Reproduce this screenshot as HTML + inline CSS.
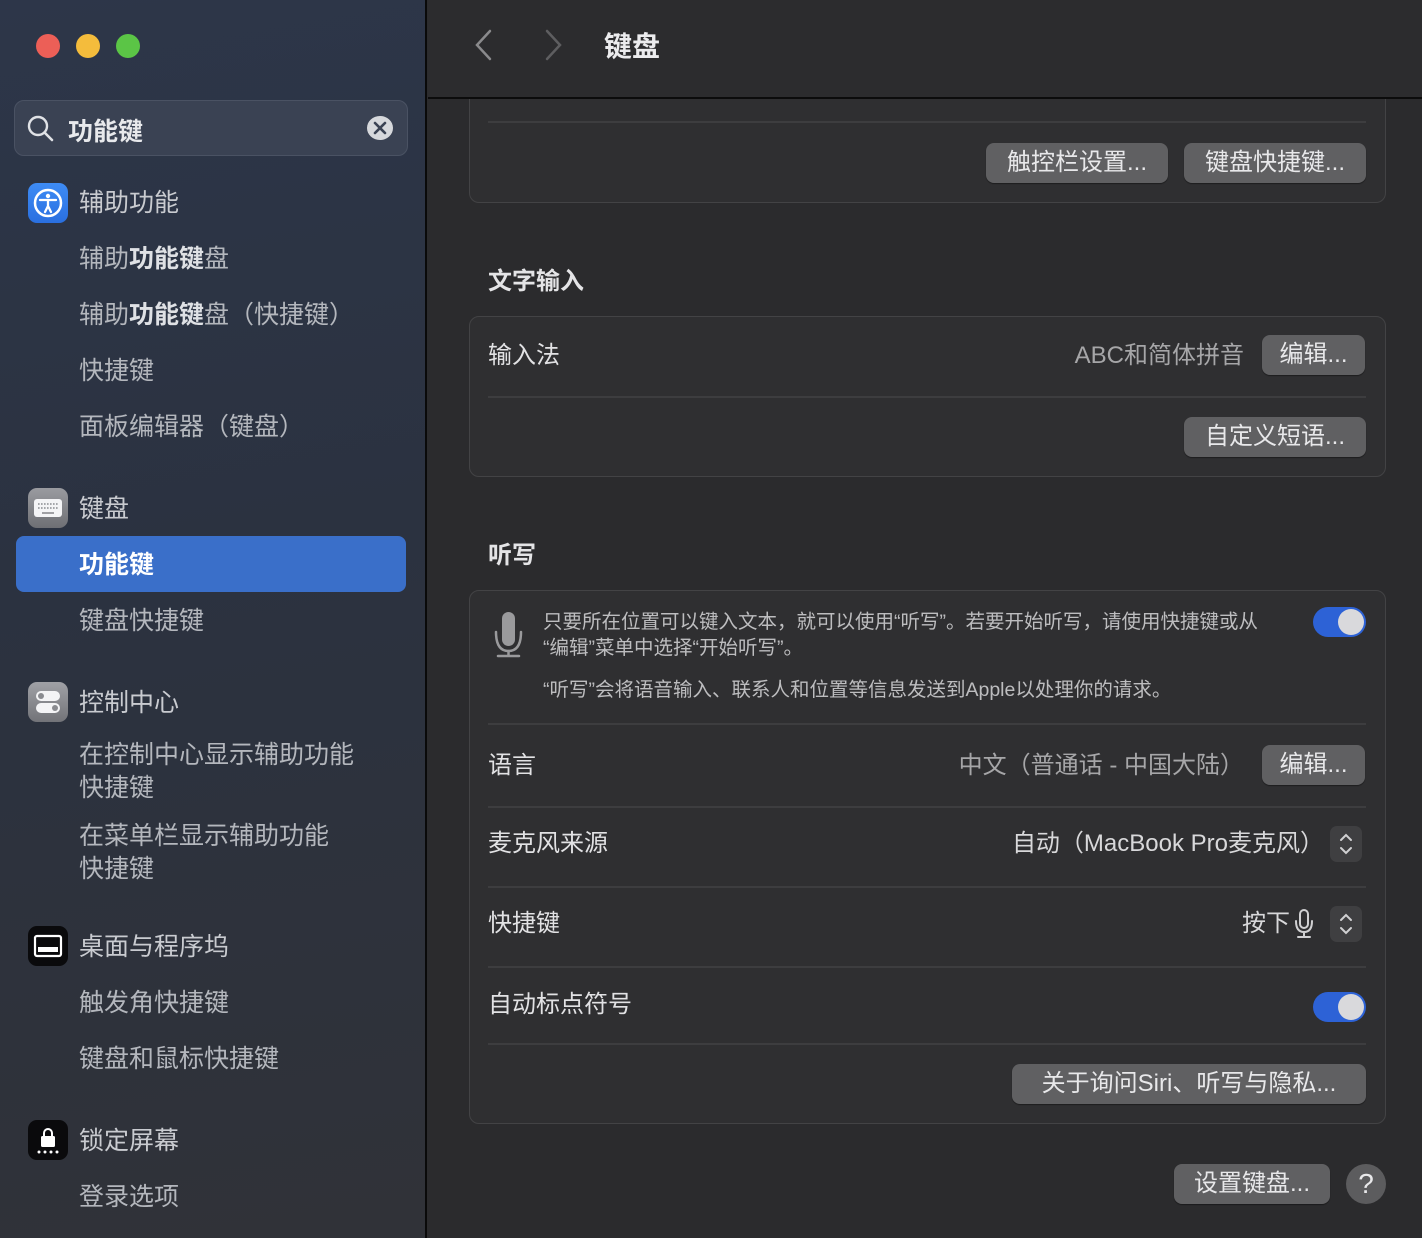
<!DOCTYPE html>
<html><head><meta charset="utf-8">
<style>
*{margin:0;padding:0;box-sizing:border-box}
body{width:1422px;height:1238px;overflow:hidden;background:#2b2b2d;font-family:"Liberation Sans","Noto Sans CJK SC",sans-serif;position:relative}
.a{position:absolute;white-space:nowrap}
#sb{position:absolute;left:0;top:0;width:427px;height:1238px;background:linear-gradient(170deg,#2d3649 0%,#2b3240 45%,#303238 100%);border-right:2px solid #0a0a0a}
.sbt{position:absolute;left:79px;font-size:25px;color:#b4b7bd;line-height:30px}
.sbh{color:#c9cbd0}
.ic{position:absolute;left:28px;width:40px;height:40px;border-radius:9px}
#main{position:absolute;left:428px;top:0;right:0;bottom:0;background:#2b2b2d}
.hdr{position:absolute;left:428px;top:0;right:0;height:99px;background:#2c2c2e;border-bottom:2px solid #0c0c0c}
.card{position:absolute;left:469px;width:917px;background:#2f2f31;border:1.5px solid #434345;border-radius:10px}
.sep{position:absolute;left:488px;width:878px;height:1.5px;background:#3d3d3f}
.lbl{position:absolute;left:488px;font-size:24px;color:#e2e2e4;line-height:30px}
.val{position:absolute;font-size:24px;color:#a6a6a8;line-height:30px;text-align:right}
.btn{position:absolute;height:40px;background:#606062;border-radius:8px;color:#e8e8ea;font-size:24px;line-height:40px;text-align:center;box-shadow:0 1px 1px rgba(0,0,0,.4)}
.sec{position:absolute;left:488px;font-size:24px;font-weight:bold;color:#e4e4e6}
.tog{position:absolute;left:1313px;width:53px;height:30px;border-radius:15px;background:#2d62d6}
.tog:after{content:"";position:absolute;right:2px;top:2px;width:26px;height:26px;border-radius:50%;background:#d9d9dc}
.step{position:absolute;left:1330px;width:32px;height:36px;border-radius:7px;background:#3f3f41}
.sm{position:absolute;left:543px;font-size:19.5px;color:#bdbdbf;line-height:26px}
</style></head><body>
<div id="main"></div>

<div class="card" style="top:60px;height:143px;border-top:none;border-radius:0 0 10px 10px"></div>
<div class="hdr"></div>
<svg class="a" style="left:470px;top:28px" width="100" height="34"><path d="M20 3 L7 17 L20 31" stroke="#8a8a8c" stroke-width="2.5" fill="none" stroke-linecap="round"/><path d="M77 3 L90 17 L77 31" stroke="#5e5e60" stroke-width="2.5" fill="none" stroke-linecap="round"/></svg>
<div class="a" style="left:604px;top:25px;font-size:28px;font-weight:bold;color:#ececee">键盘</div>

<div class="sep" style="top:121px"></div>
<div class="btn" style="left:986px;top:143px;width:182px">触控栏设置...</div>
<div class="btn" style="left:1184px;top:143px;width:182px">键盘快捷键...</div>

<div class="sec" style="top:261px">文字输入</div>
<div class="card" style="top:316px;height:161px"></div>
<div class="lbl" style="top:341px">输入法</div>
<div class="val" style="right:178px;top:341px">ABC和简体拼音</div>
<div class="btn" style="left:1262px;top:335px;width:103px">编辑...</div>
<div class="sep" style="top:396px"></div>
<div class="btn" style="left:1184px;top:417px;width:182px">自定义短语...</div>

<div class="sec" style="top:535px">听写</div>
<div class="card" style="top:590px;height:534px"></div>
<svg class="a" style="left:492px;top:610px" width="34" height="50"><rect x="10" y="2" width="13" height="34" rx="6.5" fill="#9a9a9c"/><path d="M4 22 Q4 41 16.5 41 Q29 41 29 22" stroke="#9a9a9c" stroke-width="2.5" fill="none" stroke-linecap="round"/><path d="M16.5 41 V46 M6 46 H27" stroke="#9a9a9c" stroke-width="2.5" stroke-linecap="round"/></svg>
<div class="sm" style="top:609px">只要所在位置可以键入文本，就可以使用“听写”。若要开始听写，请使用快捷键或从</div>
<div class="sm" style="top:635px">“编辑”菜单中选择“开始听写”。</div>
<div class="sm" style="top:677px">“听写”会将语音输入、联系人和位置等信息发送到Apple以处理你的请求。</div>
<div class="tog" style="top:607px"></div>
<div class="sep" style="top:723px"></div>
<div class="lbl" style="top:751px">语言</div>
<div class="val" style="right:178px;top:751px">中文（普通话 - 中国大陆）</div>
<div class="btn" style="left:1262px;top:745px;width:103px">编辑...</div>
<div class="sep" style="top:806px"></div>
<div class="lbl" style="top:829px">麦克风来源</div>
<div class="val" style="right:98px;top:829px;color:#d8d8da">自动（MacBook Pro麦克风）</div>
<div class="step" style="top:826px"></div>
<svg class="a" style="left:1336px;top:830px" width="20" height="28"><path d="M5 10 L10 5 L15 10 M5 18 L10 23 L15 18" stroke="#d0d0d2" stroke-width="2" fill="none" stroke-linecap="round"/></svg>
<div class="sep" style="top:886px"></div>
<div class="lbl" style="top:909px">快捷键</div>
<div class="val" style="right:132px;top:909px;color:#d8d8da">按下</div>
<svg class="a" style="left:1292px;top:908px" width="24" height="32"><rect x="8" y="2" width="8" height="18" rx="4" fill="none" stroke="#d0d0d2" stroke-width="2"/><path d="M4 13 Q4 24 12 24 Q20 24 20 13 M12 24 V29 M6 29 H18" stroke="#d0d0d2" stroke-width="2" fill="none" stroke-linecap="round"/></svg>
<div class="step" style="top:906px"></div>
<svg class="a" style="left:1336px;top:910px" width="20" height="28"><path d="M5 10 L10 5 L15 10 M5 18 L10 23 L15 18" stroke="#d0d0d2" stroke-width="2" fill="none" stroke-linecap="round"/></svg>
<div class="sep" style="top:966px"></div>
<div class="lbl" style="top:990px">自动标点符号</div>
<div class="tog" style="top:992px"></div>
<div class="sep" style="top:1043px"></div>
<div class="btn" style="left:1012px;top:1064px;width:354px">关于询问Siri、听写与隐私...</div>

<div class="btn" style="left:1174px;top:1164px;width:156px">设置键盘...</div>
<div class="a" style="left:1346px;top:1164px;width:40px;height:40px;border-radius:50%;background:#5c5c5e;color:#e8e8ea;font-size:28px;line-height:40px;text-align:center">?</div>

<div id="sb">
<div class="a" style="left:36px;top:34px;width:24px;height:24px;border-radius:50%;background:#ec5f57"></div>
<div class="a" style="left:76px;top:34px;width:24px;height:24px;border-radius:50%;background:#f4bc3c"></div>
<div class="a" style="left:116px;top:34px;width:24px;height:24px;border-radius:50%;background:#5bc546"></div>
<div class="a" style="left:14px;top:100px;width:394px;height:56px;border-radius:10px;background:#3a4253;border:1px solid #4a5263"></div>
<svg class="a" style="left:26px;top:114px" width="30" height="30"><circle cx="12" cy="12" r="9" stroke="#e0e2e6" stroke-width="2.4" fill="none"/><path d="M19 19 L26 26" stroke="#e0e2e6" stroke-width="2.6" stroke-linecap="round"/></svg>
<div class="a" style="left:68px;top:112px;font-size:25px;color:#e8e9ec;font-weight:bold">功能键</div>
<div class="a" style="left:367px;top:116px;width:26px;height:24px;border-radius:50%;background:#d6d8dc"></div>
<svg class="a" style="left:367px;top:116px" width="26" height="24"><path d="M8 7 L18 17 M18 7 L8 17" stroke="#3a4253" stroke-width="2.6" stroke-linecap="round"/></svg>

<div class="ic" style="top:183px;background:linear-gradient(#3e8cf5,#2a6fe0)"></div>
<svg class="a" style="left:28px;top:183px" width="40" height="40"><circle cx="20" cy="20" r="13" stroke="#fff" stroke-width="2.5" fill="none"/><circle cx="20" cy="13" r="2.2" fill="#fff"/><path d="M12 17 L28 17 M20 17 V23 M20 23 L17 29 M20 23 L23 29" stroke="#fff" stroke-width="2.3" fill="none" stroke-linecap="round"/></svg>
<div class="sbt sbh" style="top:188px">辅助功能</div>
<div class="sbt" style="top:244px">辅助<b style="color:#dfe1e5">功能键</b>盘</div>
<div class="sbt" style="top:300px">辅助<b style="color:#dfe1e5">功能键</b>盘（快捷键）</div>
<div class="sbt" style="top:356px">快捷键</div>
<div class="sbt" style="top:412px">面板编辑器（键盘）</div>

<div class="ic" style="top:488px;background:linear-gradient(#9a9ba0,#6e6f74)"></div>
<svg class="a" style="left:28px;top:488px" width="40" height="40"><rect x="6" y="11" width="28" height="18" rx="3" fill="#f4f4f6"/><path d="M10 16 H30 M10 20 H30" stroke="#8a8b90" stroke-width="1.6" stroke-dasharray="1.6 1.4"/><path d="M14 25 H26" stroke="#8a8b90" stroke-width="1.6"/></svg>
<div class="sbt sbh" style="top:494px">键盘</div>
<div class="a" style="left:16px;top:536px;width:390px;height:56px;border-radius:8px;background:#3a6fc9"></div>
<div class="sbt" style="top:550px;color:#fff;font-weight:bold">功能键</div>
<div class="sbt" style="top:606px">键盘快捷键</div>

<div class="ic" style="top:682px;background:linear-gradient(#a0a1a6,#727378)"></div>
<svg class="a" style="left:28px;top:682px" width="40" height="40"><rect x="8" y="9" width="24" height="10" rx="5" fill="#f4f4f6"/><circle cx="13" cy="14" r="3" fill="#8a8b90"/><rect x="8" y="21" width="24" height="10" rx="5" fill="#f4f4f6"/><circle cx="27" cy="26" r="3" fill="#8a8b90"/></svg>
<div class="sbt sbh" style="top:688px">控制中心</div>
<div class="sbt" style="top:740px">在控制中心显示辅助功能</div>
<div class="sbt" style="top:773px">快捷键</div>
<div class="sbt" style="top:821px">在菜单栏显示辅助功能</div>
<div class="sbt" style="top:854px">快捷键</div>

<div class="ic" style="top:926px;background:#0a0a0c"></div>
<svg class="a" style="left:28px;top:926px" width="40" height="40"><rect x="7" y="10" width="26" height="20" rx="2" fill="none" stroke="#fff" stroke-width="2.2"/><rect x="10" y="21" width="20" height="5" fill="#fff"/></svg>
<div class="sbt sbh" style="top:932px">桌面与程序坞</div>
<div class="sbt" style="top:988px">触发角快捷键</div>
<div class="sbt" style="top:1044px">键盘和鼠标快捷键</div>

<div class="ic" style="top:1120px;background:#0a0a0c"></div>
<svg class="a" style="left:28px;top:1120px" width="40" height="40"><rect x="13" y="16" width="14" height="11" rx="1.5" fill="#fff"/><path d="M16 16 V13 a4 4 0 0 1 8 0 V16" stroke="#fff" stroke-width="2" fill="none"/><circle cx="11" cy="32" r="1.5" fill="#fff"/><circle cx="17" cy="32" r="1.5" fill="#fff"/><circle cx="23" cy="32" r="1.5" fill="#fff"/><circle cx="29" cy="32" r="1.5" fill="#fff"/></svg>
<div class="sbt sbh" style="top:1126px">锁定屏幕</div>
<div class="sbt" style="top:1182px">登录选项</div>
</div>
</body></html>
